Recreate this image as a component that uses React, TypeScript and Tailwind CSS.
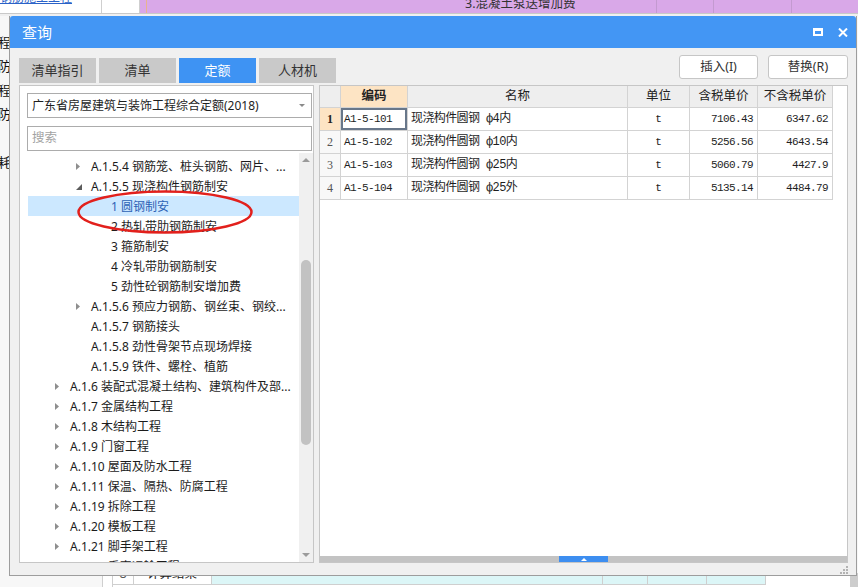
import React from "react";

type TreeRow = {
  label: string;
  level: 0 | 1 | 2;
  arrow?: "closed" | "open";
  selected?: boolean;
};

const TREE: TreeRow[] = [
  { label: "A.1.5.4 钢筋笼、桩头钢筋、网片、...", level: 1, arrow: "closed" },
  { label: "A.1.5.5 现浇构件钢筋制安", level: 1, arrow: "open" },
  { label: "1 圆钢制安", level: 2, selected: true },
  { label: "2 热轧带肋钢筋制安", level: 2 },
  { label: "3 箍筋制安", level: 2 },
  { label: "4 冷轧带肋钢筋制安", level: 2 },
  { label: "5 劲性砼钢筋制安增加费", level: 2 },
  { label: "A.1.5.6 预应力钢筋、钢丝束、钢绞...", level: 1, arrow: "closed" },
  { label: "A.1.5.7 钢筋接头", level: 1 },
  { label: "A.1.5.8 劲性骨架节点现场焊接", level: 1 },
  { label: "A.1.5.9 铁件、螺栓、植筋", level: 1 },
  { label: "A.1.6 装配式混凝土结构、建筑构件及部...", level: 0, arrow: "closed" },
  { label: "A.1.7 金属结构工程", level: 0, arrow: "closed" },
  { label: "A.1.8 木结构工程", level: 0, arrow: "closed" },
  { label: "A.1.9 门窗工程", level: 0, arrow: "closed" },
  { label: "A.1.10 屋面及防水工程", level: 0, arrow: "closed" },
  { label: "A.1.11 保温、隔热、防腐工程", level: 0, arrow: "closed" },
  { label: "A.1.19 拆除工程", level: 0, arrow: "closed" },
  { label: "A.1.20 模板工程", level: 0, arrow: "closed" },
  { label: "A.1.21 脚手架工程", level: 0, arrow: "closed" },
  { label: "A.1.22 垂直运输工程", level: 0, arrow: "closed" },
];

const QUOTAS = [
  { n: "1", code: "A1-5-101", name: "现浇构件圆钢 ф4内", unit: "t", tax: "7106.43", net: "6347.62" },
  { n: "2", code: "A1-5-102", name: "现浇构件圆钢 ф10内", unit: "t", tax: "5256.56", net: "4643.54" },
  { n: "3", code: "A1-5-103", name: "现浇构件圆钢 ф25内", unit: "t", tax: "5060.79", net: "4427.9" },
  { n: "4", code: "A1-5-104", name: "现浇构件圆钢 ф25外", unit: "t", tax: "5135.14", net: "4484.79" },
];

const TABS = ["清单指引", "清单", "定额", "人材机"];

const GRID = "grid grid-cols-[21px_67px_220px_62px_68px_75px]";
const CELL = "border-r border-b border-[#d3d3d3] flex items-center";
const MONO = "font-['Liberation_Mono','Noto_Sans_CJK_SC',monospace]";

function Caret({ open }: { open?: boolean }) {
  if (open) {
    return (
      <svg width="6" height="6" viewBox="0 0 6 6" className="ml-[1px]">
        <path d="M6 0V6H0Z" fill="#5c5c5c" />
      </svg>
    );
  }
  return (
    <svg width="4" height="7" viewBox="0 0 4 7" className="ml-[1px]">
      <path d="M0 0L4 3.5L0 7Z" fill="#8e8e8e" />
    </svg>
  );
}

function TinyArrow({ up }: { up?: boolean }) {
  return (
    <svg width="8" height="4" viewBox="0 0 8 4">
      <path d={up ? "M0 4L4 0L8 4Z" : "M0 0L8 0L4 4Z"} fill="#9b9b9b" />
    </svg>
  );
}

// 背景里被弹窗压住的主界面
function Backdrop() {
  return (
    <div className="flex h-full flex-col">
      <div className="h-[16px] bg-[#f0f0f0]">
        <div className="flex h-[14px] border-b border-[#c9c9c9]">
          <div className="w-[102px] overflow-hidden border-r border-[#cfcfcf] bg-white">
            <div className="-mt-[11px] whitespace-nowrap text-[12px] text-[#2a62c8] underline">钢筋施工工程</div>
          </div>
          <div className="w-[38px] border-r border-[#cfcfcf] bg-white" />
          <div className="flex flex-1 bg-[#d9a8e8]">
            <div className="w-[7px] border-r border-[#e7b48f]" />
            <div className="w-[510px] overflow-hidden border-r border-[#c39ad0] pl-[318px]">
              <div className="-mt-[5px] whitespace-nowrap text-[12.5px] text-[#333]">3.混凝土泵送增加费</div>
            </div>
            <div className="w-[57px] border-r border-[#c39ad0]" />
            <div className="w-[78px] border-r border-[#c39ad0]" />
            <div className="flex-1" />
          </div>
        </div>
      </div>

      <div className="flex-1 bg-[#f7f7f7] pt-[15px] text-[13px] text-[#111]">
        {["程", "防", "程", "防", "", "耗"].map((c, i) => (
          <div key={i} className="-ml-[2px] flex h-[24px] items-center">
            {c}
          </div>
        ))}
      </div>

      <div className="flex h-[14px] overflow-hidden bg-white text-[12.5px] leading-[14px] text-[#222]">
        <div className="w-[103px] border-r border-[#cfcfcf] bg-[#f7f7f7]" />
        <div className="w-[10px] border-r border-[#cfcfcf]" />
        <div className="flex h-[12px] border-b border-[#cfcfcf]">
          <div className="w-[21px] overflow-hidden border-r border-[#cfcfcf] text-center text-[#555]">
            <div className="-mt-[6px]">8</div>
          </div>
          <div className="w-[78px] overflow-hidden border-r border-[#cfcfcf] pl-[13px]">
            <div className="-mt-[6px]">计算结果</div>
          </div>
          <div className="w-[391px] border-r border-[#cfcfcf] bg-[#dcf6f7]" />
          <div className="w-[45px] border-r border-[#cfcfcf] bg-[#dcf6f7]" />
          <div className="w-[59px] border-r border-[#cfcfcf] bg-[#dcf6f7]" />
          <div className="w-[59px] border-r border-[#cfcfcf] bg-[#dcf6f7]" />
        </div>
        <div className="flex-1" />
        <div className="w-[8px] bg-[#cdcdcd]" />
      </div>
    </div>
  );
}

function TreePanel() {
  return (
    <div className="flex w-[295px] flex-col border border-[#c6c6c6] bg-white">
      <div className="ml-[7px] mt-[7px] flex h-[25px] w-[285px] items-center justify-between border border-[#acacac] bg-white pl-[4px] pr-[6px] text-[12px] text-[#1e1e1e]">
        <span className="whitespace-nowrap">广东省房屋建筑与装饰工程综合定额(2018)</span>
        <svg width="6" height="3" viewBox="0 0 6 3">
          <path d="M0 0H6L3 3Z" fill="#8a8a8a" />
        </svg>
      </div>
      <div className="ml-[7px] mt-[8px] flex h-[25px] w-[285px] items-center border border-[#acacac] bg-white pl-[4px] text-[12.5px] text-[#a3a3a3]">
        搜索
      </div>
      <div className="mt-[2px] flex min-h-0 flex-1">
        <div className="min-w-0 flex-1 overflow-hidden pl-[8px] pt-[3px]">
          {TREE.map((r, i) => (
            <div
              key={i}
              className={`flex h-[20px] items-center whitespace-nowrap pt-[1px] text-[12px] ${
                r.selected ? "bg-[#cce8ff] text-[#2d62b5]" : "text-[#1c1c1c]"
              } ${r.level === 0 ? "pl-[26px]" : r.level === 1 ? "pl-[47px]" : "pl-[83px]"}`}
            >
              {r.level < 2 && (
                <span className="flex w-[16px] shrink-0 items-center">
                  {r.arrow && <Caret open={r.arrow === "open"} />}
                </span>
              )}
              <span>{r.label}</span>
            </div>
          ))}
        </div>
        <div className="flex w-[14px] flex-col items-center bg-[#f0f0f0]">
          <div className="flex h-[14px] items-center justify-center">
            <TinyArrow up />
          </div>
          <div className="mt-[93px] h-[185px] w-[10px] rounded-full bg-[#c2c2c2]" />
          <div className="flex-1" />
          <div className="flex h-[14px] items-center justify-center">
            <TinyArrow />
          </div>
        </div>
      </div>
    </div>
  );
}

function QuotaTable() {
  return (
    <div className="flex flex-1 flex-col border border-[#c6c6c6] bg-white">
      <div className={`${GRID} h-[22px] text-[12.5px] text-[#222]`}>
        <div className={`${CELL} bg-[#eeeeee]`} />
        <div className={`${CELL} justify-center bg-[#fde4c4] font-bold`}>编码</div>
        <div className={`${CELL} justify-center bg-[#eeeeee]`}>名称</div>
        <div className={`${CELL} justify-center bg-[#eeeeee]`}>单位</div>
        <div className={`${CELL} justify-center bg-[#eeeeee]`}>含税单价</div>
        <div className={`${CELL} justify-center bg-[#eeeeee]`}>不含税单价</div>
      </div>
      {QUOTAS.map((q, i) => (
        <div key={q.code} className={`${GRID} h-[23px] text-[#1e1e1e]`}>
          <div
            className={`${CELL} justify-center font-['Liberation_Serif',serif] text-[12px] ${
              i === 0 ? "bg-[#fde4c4] font-bold text-[#222]" : "bg-[#f8f8f8] text-[#555]"
            }`}
          >
            {q.n}
          </div>
          <div
            className={`${CELL} ${MONO} pl-[3px] text-[11px] tracking-[-0.6px] ${
              i === 0 ? "shadow-[inset_0_0_0_2px_#68778a]" : ""
            }`}
          >
            {q.code}
          </div>
          <div className={`${CELL} ${MONO} whitespace-pre pl-[3px] text-[12px] tracking-[-0.6px]`}>{q.name}</div>
          <div className={`${CELL} ${MONO} justify-center text-[11px]`}>{q.unit}</div>
          <div className={`${CELL} ${MONO} justify-end pr-[4px] text-[11px] tracking-[-0.6px]`}>{q.tax}</div>
          <div className={`${CELL} ${MONO} justify-end pr-[4px] text-[11px] tracking-[-0.6px]`}>{q.net}</div>
        </div>
      ))}
      <div className="flex-1" />
      <div className="h-[6px] bg-[#c3c3c3] pl-[239px]">
        <div className="flex h-[6px] w-[49px] items-center justify-center bg-[#3d8ef0]">
          <svg width="6" height="3" viewBox="0 0 6 3">
            <path d="M0 3L3 0L6 3Z" fill="#ffffff" />
          </svg>
        </div>
      </div>
    </div>
  );
}

export default function App() {
  return (
    <div className="relative h-[587px] w-[858px] overflow-hidden bg-[#f7f7f7] font-['Noto_Sans','Noto_Sans_CJK_SC',sans-serif]">
      <Backdrop />

      {/* 查询弹窗 */}
      <div className="absolute left-[9px] top-[16px] flex h-[560px] w-[848px] flex-col border-x border-b border-[#9d9d9d] bg-[#f0f0f0]">
        <div className="flex h-[32px] items-center justify-between rounded-t-[3px] bg-[#4396f4] pl-[12px] pr-[8px] text-white">
          <span className="text-[15px]">查询</span>
          <div className="flex items-center gap-[15px]">
            <div className="h-[8px] w-[10px] border-2 border-t-[3px] border-white" />
            <svg width="10" height="9" viewBox="0 0 10 9">
              <path d="M1 0.5L9 8.5M9 0.5L1 8.5" stroke="#ffffff" strokeWidth="2" />
            </svg>
          </div>
        </div>

        <div className="flex flex-1 flex-col pl-[9px] pr-[8px]">
          <div className="flex h-[37px] items-start justify-between">
            <div className="mt-[10px] flex gap-[3px]">
              {TABS.map((t) => (
                <div
                  key={t}
                  className={`flex h-[25px] w-[77px] items-center justify-center text-[13px] ${
                    t === "定额" ? "bg-[#3e93f3] text-white" : "bg-[#c9c9c9] text-[#333]"
                  }`}
                >
                  {t}
                </div>
              ))}
            </div>
            <div className="mt-[7px] flex gap-[10px]">
              <button className="h-[24px] w-[79px] rounded-[3px] border border-[#c6c6c6] bg-white text-[12.5px] text-[#333]">
                插入(I)
              </button>
              <button className="h-[24px] w-[80px] rounded-[3px] border border-[#c6c6c6] bg-white text-[12.5px] text-[#333]">
                替换(R)
              </button>
            </div>
          </div>

          <div className="flex h-[478px] gap-[5px]">
            <TreePanel />
            <QuotaTable />
          </div>

          <div className="flex h-[12px] items-end justify-end pb-[1px]">
            <svg width="9" height="9" viewBox="0 0 9 9">
              <rect x="7" y="1" width="2" height="2" fill="#b3b3b3" />
              <rect x="4" y="4" width="2" height="2" fill="#b3b3b3" />
              <rect x="7" y="4" width="2" height="2" fill="#b3b3b3" />
              <rect x="1" y="7" width="2" height="2" fill="#b3b3b3" />
              <rect x="4" y="7" width="2" height="2" fill="#b3b3b3" />
              <rect x="7" y="7" width="2" height="2" fill="#b3b3b3" />
            </svg>
          </div>
        </div>
      </div>

      {/* 红圈标注 */}
      <svg className="pointer-events-none absolute left-[76px] top-[189px]" width="178" height="46" viewBox="0 0 178 46">
        <ellipse cx="89" cy="23" rx="86.5" ry="20.5" fill="none" stroke="#e2201c" strokeWidth="2.5" />
      </svg>
    </div>
  );
}
